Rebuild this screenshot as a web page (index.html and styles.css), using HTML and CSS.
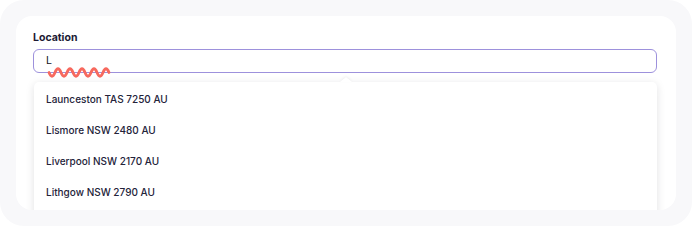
FILE: index.html
```html
<!DOCTYPE html>
<html lang="en">
<head>
<meta charset="utf-8">
<title>Location</title>
<link rel="stylesheet" href="styles.css">
</head>
<body>
<div class="frame">
  <div class="card">
    <label class="label" for="loc">Location</label>
    <div class="field">
      <div class="input" id="loc">L</div>
      <svg class="squiggle" width="64" height="13" viewBox="0 0 64 13" aria-hidden="true">
        <path d="M2 6.5 q3 7.5 6 0 t6 0 t6 0 t6 0 t6 0 t6 0 t6 0 t6 0 t6 0 t6 0" fill="none" stroke="#f7695e" stroke-width="2.8" stroke-linecap="round" stroke-linejoin="round"/>
      </svg>
    </div>
    <ul class="menu">
      <li class="item">Launceston TAS 7250 AU</li>
      <li class="item">Lismore NSW 2480 AU</li>
      <li class="item">Liverpool NSW 2170 AU</li>
      <li class="item">Lithgow NSW 2790 AU</li>
    </ul>
  </div>
</div>
</body>
</html>
```
FILE: styles.css
```css
html, body {
  margin: 0;
  padding: 0;
  background: #ffffff;
}
body {
  font-family: Inter, "Liberation Sans", sans-serif;
  color: #1f1e33;
}
.frame {
  width: 692px;
  height: 226px;
  box-sizing: border-box;
  padding: 16px;
  background: #f8f8fa;
  border-radius: 24px;
}
.card {
  height: 194px;
  box-sizing: border-box;
  padding: 15px 19px 0 17px;
  background: #ffffff;
  border-radius: 16px;
  overflow: hidden;
}
.label {
  display: block;
  font-size: 10.5px;
  line-height: 13px;
  font-weight: 700;
  color: #1c1a33;
  margin-bottom: 5px;
}
.field {
  position: relative;
}
.input {
  height: 24px;
  box-sizing: border-box;
  border: 1px solid #9d91dc;
  border-radius: 6px;
  padding: 0 12px;
  font-size: 10.5px;
  line-height: 22px;
  color: #111122;
}
.squiggle {
  position: absolute;
  left: 14px;
  top: 17px;
}
.menu {
  position: relative;
  list-style: none;
  margin: 9px 0 0 1px;
  padding: 2px 0 30px;
  background: #ffffff;
  border-radius: 5px;
  box-shadow: 0 2px 8px rgba(20, 20, 40, 0.13);
}
.menu::before {
  content: "";
  position: absolute;
  left: 50%;
  top: -5px;
  margin-left: -6px;
  width: 0;
  height: 0;
  border-left: 6px solid transparent;
  border-right: 6px solid transparent;
  border-bottom: 5px solid #ffffff;
  filter: drop-shadow(0 -1px 1px rgba(20, 20, 40, 0.06));
}
.item {
  height: 31px;
  padding: 0 12px;
  font-size: 10px;
  line-height: 31px;
  color: #24233a;
  font-weight: 450;
}
```
